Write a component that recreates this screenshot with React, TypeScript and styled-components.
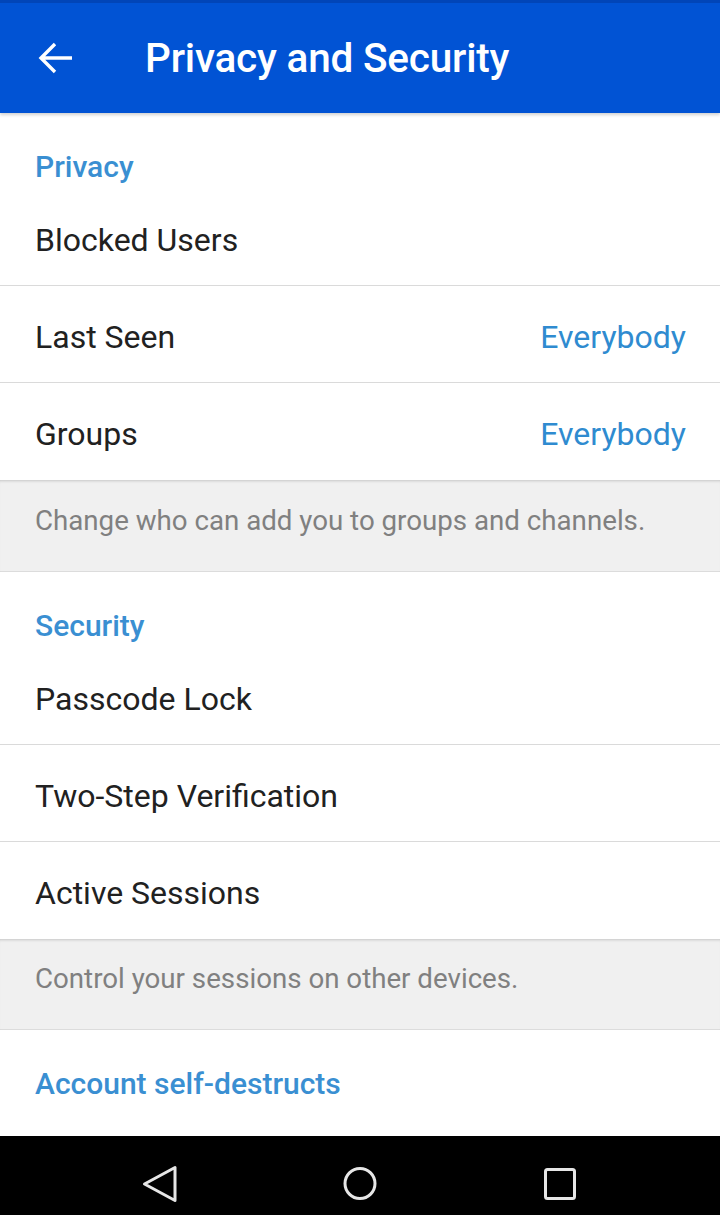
import React from "react";
import styled, { createGlobalStyle } from "styled-components";

const GlobalStyle = createGlobalStyle`
  html, body {
    margin: 0;
    padding: 0;
    background: #ffffff;
  }
  body {
    font-family: Roboto, "Noto Sans", "Liberation Sans", sans-serif;
    -webkit-font-smoothing: antialiased;
  }
`;

const Screen = styled.div`
  width: 720px;
  height: 1215px;
  display: flex;
  flex-direction: column;
  overflow: hidden;
  background: #ffffff;
`;

const Header = styled.header`
  height: 113px;
  flex-shrink: 0;
  display: flex;
  align-items: center;
  background: #0153d4;
  border-top: 3px solid #0145b8;
  box-sizing: border-box;
  box-shadow: 0 2px 3px rgba(0, 0, 0, 0.18);
  position: relative;
  z-index: 2;
`;

const BackButton = styled.button`
  width: 110px;
  height: 100%;
  display: flex;
  align-items: center;
  padding: 0 0 0 38px;
  margin: 0;
  border: none;
  background: transparent;
  box-sizing: border-box;
`;

const Title = styled.h1`
  margin: 0 0 0 35px;
  color: #ffffff;
  font-size: 40.5px;
  font-weight: 500;
  letter-spacing: -0.2px;
`;

const Content = styled.main`
  flex: 1;
  display: flex;
  flex-direction: column;
  overflow: hidden;
`;

const SectionHeader = styled.div<{ $last?: boolean }>`
  height: ${(p) => (p.$last ? "auto" : "76px")};
  flex: ${(p) => (p.$last ? 1 : "none")};
  padding: 36px 35px 0;
  box-sizing: border-box;
  color: #3a8fd2;
  font-size: 30px;
  line-height: 36px;
  font-weight: 500;
`;

const Row = styled.div<{ $divider?: boolean }>`
  height: 97px;
  flex-shrink: 0;
  display: flex;
  align-items: center;
  justify-content: space-between;
  padding: 5px 34px 0 35px;
  box-sizing: border-box;
  border-bottom: ${(p) => (p.$divider ? "1px solid #dadada" : "none")};
  font-size: 32px;
  color: #212121;
`;

const RowValue = styled.span`
  color: #2f8bd0;
`;

const Info = styled.div<{ $height: number }>`
  height: ${(p) => p.$height}px;
  flex-shrink: 0;
  display: flex;
  align-items: center;
  padding: 0 35px 12px;
  box-sizing: border-box;
  background: #f0f0f0;
  color: #808080;
  font-size: 27.7px;
  box-shadow: inset 0 3px 3px -2px rgba(0, 0, 0, 0.18),
    inset 0 -1px 0 #dcdcdc;
`;

const NavBar = styled.nav`
  height: 79px;
  flex-shrink: 0;
  display: flex;
  align-items: flex-start;
  justify-content: center;
  gap: 160px;
  padding-top: 28px;
  box-sizing: border-box;
  background: #000000;
`;

const NavIcon = styled.svg`
  width: 40px;
  height: 40px;
  flex-shrink: 0;
`;

type Item = { label: string; value?: string };

const privacyItems: Item[] = [
  { label: "Blocked Users" },
  { label: "Last Seen", value: "Everybody" },
  { label: "Groups", value: "Everybody" },
];

const securityItems: Item[] = [
  { label: "Passcode Lock" },
  { label: "Two-Step Verification" },
  { label: "Active Sessions" },
];

const ItemList = ({ items }: { items: Item[] }) => (
  <>
    {items.map((item, i) => (
      <Row key={item.label} $divider={i < items.length - 1}>
        {item.label}
        {item.value && <RowValue>{item.value}</RowValue>}
      </Row>
    ))}
  </>
);

const App = () => {
  return (
    <>
      <GlobalStyle />
      <Screen>
        <Header>
          <BackButton aria-label="Back">
            <svg width="36" height="34" viewBox="0 0 36 34">
              <path
                d="M34 17H3M17 3L3 17l14 14"
                fill="none"
                stroke="#ffffff"
                strokeWidth="3.4"
              />
            </svg>
          </BackButton>
          <Title>Privacy and Security</Title>
        </Header>

        <Content>
          <SectionHeader>Privacy</SectionHeader>
          <ItemList items={privacyItems} />
          <Info $height={92}>Change who can add you to groups and channels.</Info>

          <SectionHeader>Security</SectionHeader>
          <ItemList items={securityItems} />
          <Info $height={91}>Control your sessions on other devices.</Info>

          <SectionHeader $last>Account self-destructs</SectionHeader>
        </Content>

        <NavBar>
          <NavIcon viewBox="0 0 40 40">
            <path
              d="M35 3.5v33L4.5 20z"
              fill="none"
              stroke="#e6e6e6"
              strokeWidth="3"
              strokeLinejoin="round"
            />
          </NavIcon>
          <NavIcon viewBox="0 0 40 40">
            <circle
              cx="20"
              cy="19.5"
              r="15"
              fill="none"
              stroke="#e6e6e6"
              strokeWidth="3"
            />
          </NavIcon>
          <NavIcon viewBox="0 0 40 40">
            <rect
              x="5.5"
              y="5.5"
              width="29"
              height="29"
              rx="2"
              fill="none"
              stroke="#e6e6e6"
              strokeWidth="3"
            />
          </NavIcon>
        </NavBar>
      </Screen>
    </>
  );
};

export default App;
